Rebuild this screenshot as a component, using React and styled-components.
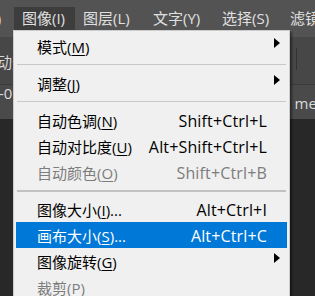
import styled, { createGlobalStyle } from "styled-components";

const GlobalStyle = createGlobalStyle`
    html, body {
        margin: 0;
        padding: 0;
        background: #282828;
        overflow: hidden;
    }
    * { box-sizing: border-box; }
`;

const FONT = `"Open Sans", "Noto Sans CJK SC", sans-serif`;

const Screen = styled.div`
    position: relative;
    width: 315px;
    height: 296px;
    overflow: hidden;
    display: flex;
    flex-direction: column;
    font-family: ${FONT};
    background: #282828;
`;

const MenuBar = styled.div`
    height: 37px;
    flex-shrink: 0;
    background: #535353;
    display: flex;
    align-items: flex-start;
    padding-top: 7px;
    margin-left: -54px;
    white-space: nowrap;
`;

const BarItem = styled.div`
    flex-shrink: 0;
    width: ${(p) => p.$w}px;
    height: 23px;
    line-height: 23px;
    padding-left: 8px;
    font-size: 15px;
    color: #e0e0e0;
    background: ${(p) => (p.$open ? "#3d3d3d" : "transparent")};
`;

const OptionsBar = styled.div`
    height: 48px;
    flex-shrink: 0;
    background: #474747;
    border-bottom: 1px solid #3a3a3a;
    display: flex;
    align-items: center;
    justify-content: space-between;
    padding-right: 18px;
    white-space: nowrap;
`;

const OptionsText = styled.span`
    font-size: 15px;
    color: #d6d6d6;
    margin-left: -18px;
    margin-top: 2px;
`;

const Divider = styled.div`
    width: 1px;
    height: 22px;
    background: #333;
    margin-top: -3px;
`;

const TabBar = styled.div`
    height: 34px;
    flex-shrink: 0;
    background: #4a4a4a;
    display: flex;
    justify-content: space-between;
    white-space: nowrap;
    overflow: hidden;
`;

const TabText = styled.span`
    font-size: 15px;
    line-height: 20px;
    color: #dcdcdc;
    margin-top: ${(p) => p.$top}px;
    margin-left: ${(p) => p.$left || 0}px;
    margin-right: ${(p) => p.$right || 0}px;
`;

const Canvas = styled.div`
    flex: 1;
    background: #282828;
`;

const Popup = styled.div`
    position: absolute;
    left: 13px;
    top: 30px;
    width: 277px;
    background: #f0f0f0;
    border: 1px solid #cccccc;
    padding: 2px;
    box-shadow: 2px 2px 2px rgba(0, 0, 0, 0.45);
    font-size: 15px;
`;

const Item = styled.div`
    position: relative;
    display: flex;
    align-items: center;
    height: 26px;
    padding: 0 20px 0 21px;
    white-space: nowrap;
    background: ${(p) => (p.$active ? "#0078d7" : "transparent")};
    color: ${(p) => (p.$active ? "#ffffff" : p.$disabled ? "#7d7d7d" : "#000000")};
`;

const Label = styled.span`
    flex: 1;
    padding-top: 1px;
`;

const Shortcut = styled.span`
    font-size: 16px;
    letter-spacing: 0.15px;
    padding-top: 1px;
`;

const Key = styled.u`
    text-decoration: underline;
    text-underline-offset: 2px;
    text-decoration-thickness: 1px;
`;

const Arrow = styled.span`
    position: absolute;
    right: 7px;
    top: 5px;
    width: 0;
    height: 0;
    border-top: 5.5px solid transparent;
    border-bottom: 5.5px solid transparent;
    border-left: 6px solid #000;
`;

const Separator = styled.div`
    height: 11px;
    display: flex;
    align-items: center;
    padding: 0 1px;
    &::after {
        content: "";
        flex: 1;
        height: ${(p) => (p.$thick ? 2 : 1)}px;
        background: ${(p) => (p.$thick ? "#c2c2c2" : "#c8c8c8")};
    }
`;

const bar = [
    { text: "编辑(E)", w: 68 },
    { text: "图像(I)", w: 61, open: true },
    { text: "图层(L)", w: 70 },
    { text: "文字(Y)", w: 69 },
    { text: "选择(S)", w: 68 },
    { text: "滤镜(T)", w: 68 },
];

const menu = [
    { label: "模式", key: "M", sub: true },
    { sep: true },
    { label: "调整", key: "J", sub: true },
    { sep: true },
    { label: "自动色调", key: "N", shortcut: "Shift+Ctrl+L" },
    { label: "自动对比度", key: "U", shortcut: "Alt+Shift+Ctrl+L" },
    { label: "自动颜色", key: "O", shortcut: "Shift+Ctrl+B", disabled: true },
    { sep: true, thick: true },
    { label: "图像大小", key: "I", dots: true, shortcut: "Alt+Ctrl+I" },
    { label: "画布大小", key: "S", dots: true, shortcut: "Alt+Ctrl+C", active: true },
    { label: "图像旋转", key: "G", sub: true },
    { label: "裁剪", key: "P", disabled: true },
];

function App() {
    return (
        <>
            <GlobalStyle />
            <Screen>
                <MenuBar>
                    {bar.map((b) => (
                        <BarItem key={b.text} $w={b.w} $open={b.open}>
                            {b.text}
                        </BarItem>
                    ))}
                </MenuBar>
                <OptionsBar>
                    <OptionsText>自动选择</OptionsText>
                    <Divider />
                </OptionsBar>
                <TabBar>
                    <TabText $top={-2} $left={-1}>-0.5</TabText>
                    <TabText $top={8} $right={-17}>me_1</TabText>
                </TabBar>
                <Canvas />
                <Popup>
                    {menu.map((m, i) =>
                        m.sep ? (
                            <Separator key={i} $thick={m.thick} />
                        ) : (
                            <Item key={i} $active={m.active} $disabled={m.disabled}>
                                <Label>
                                    {m.label}(<Key>{m.key}</Key>){m.dots ? "..." : ""}
                                </Label>
                                {m.shortcut && <Shortcut>{m.shortcut}</Shortcut>}
                                {m.sub && <Arrow />}
                            </Item>
                        )
                    )}
                </Popup>
            </Screen>
        </>
    );
}

export default App;
